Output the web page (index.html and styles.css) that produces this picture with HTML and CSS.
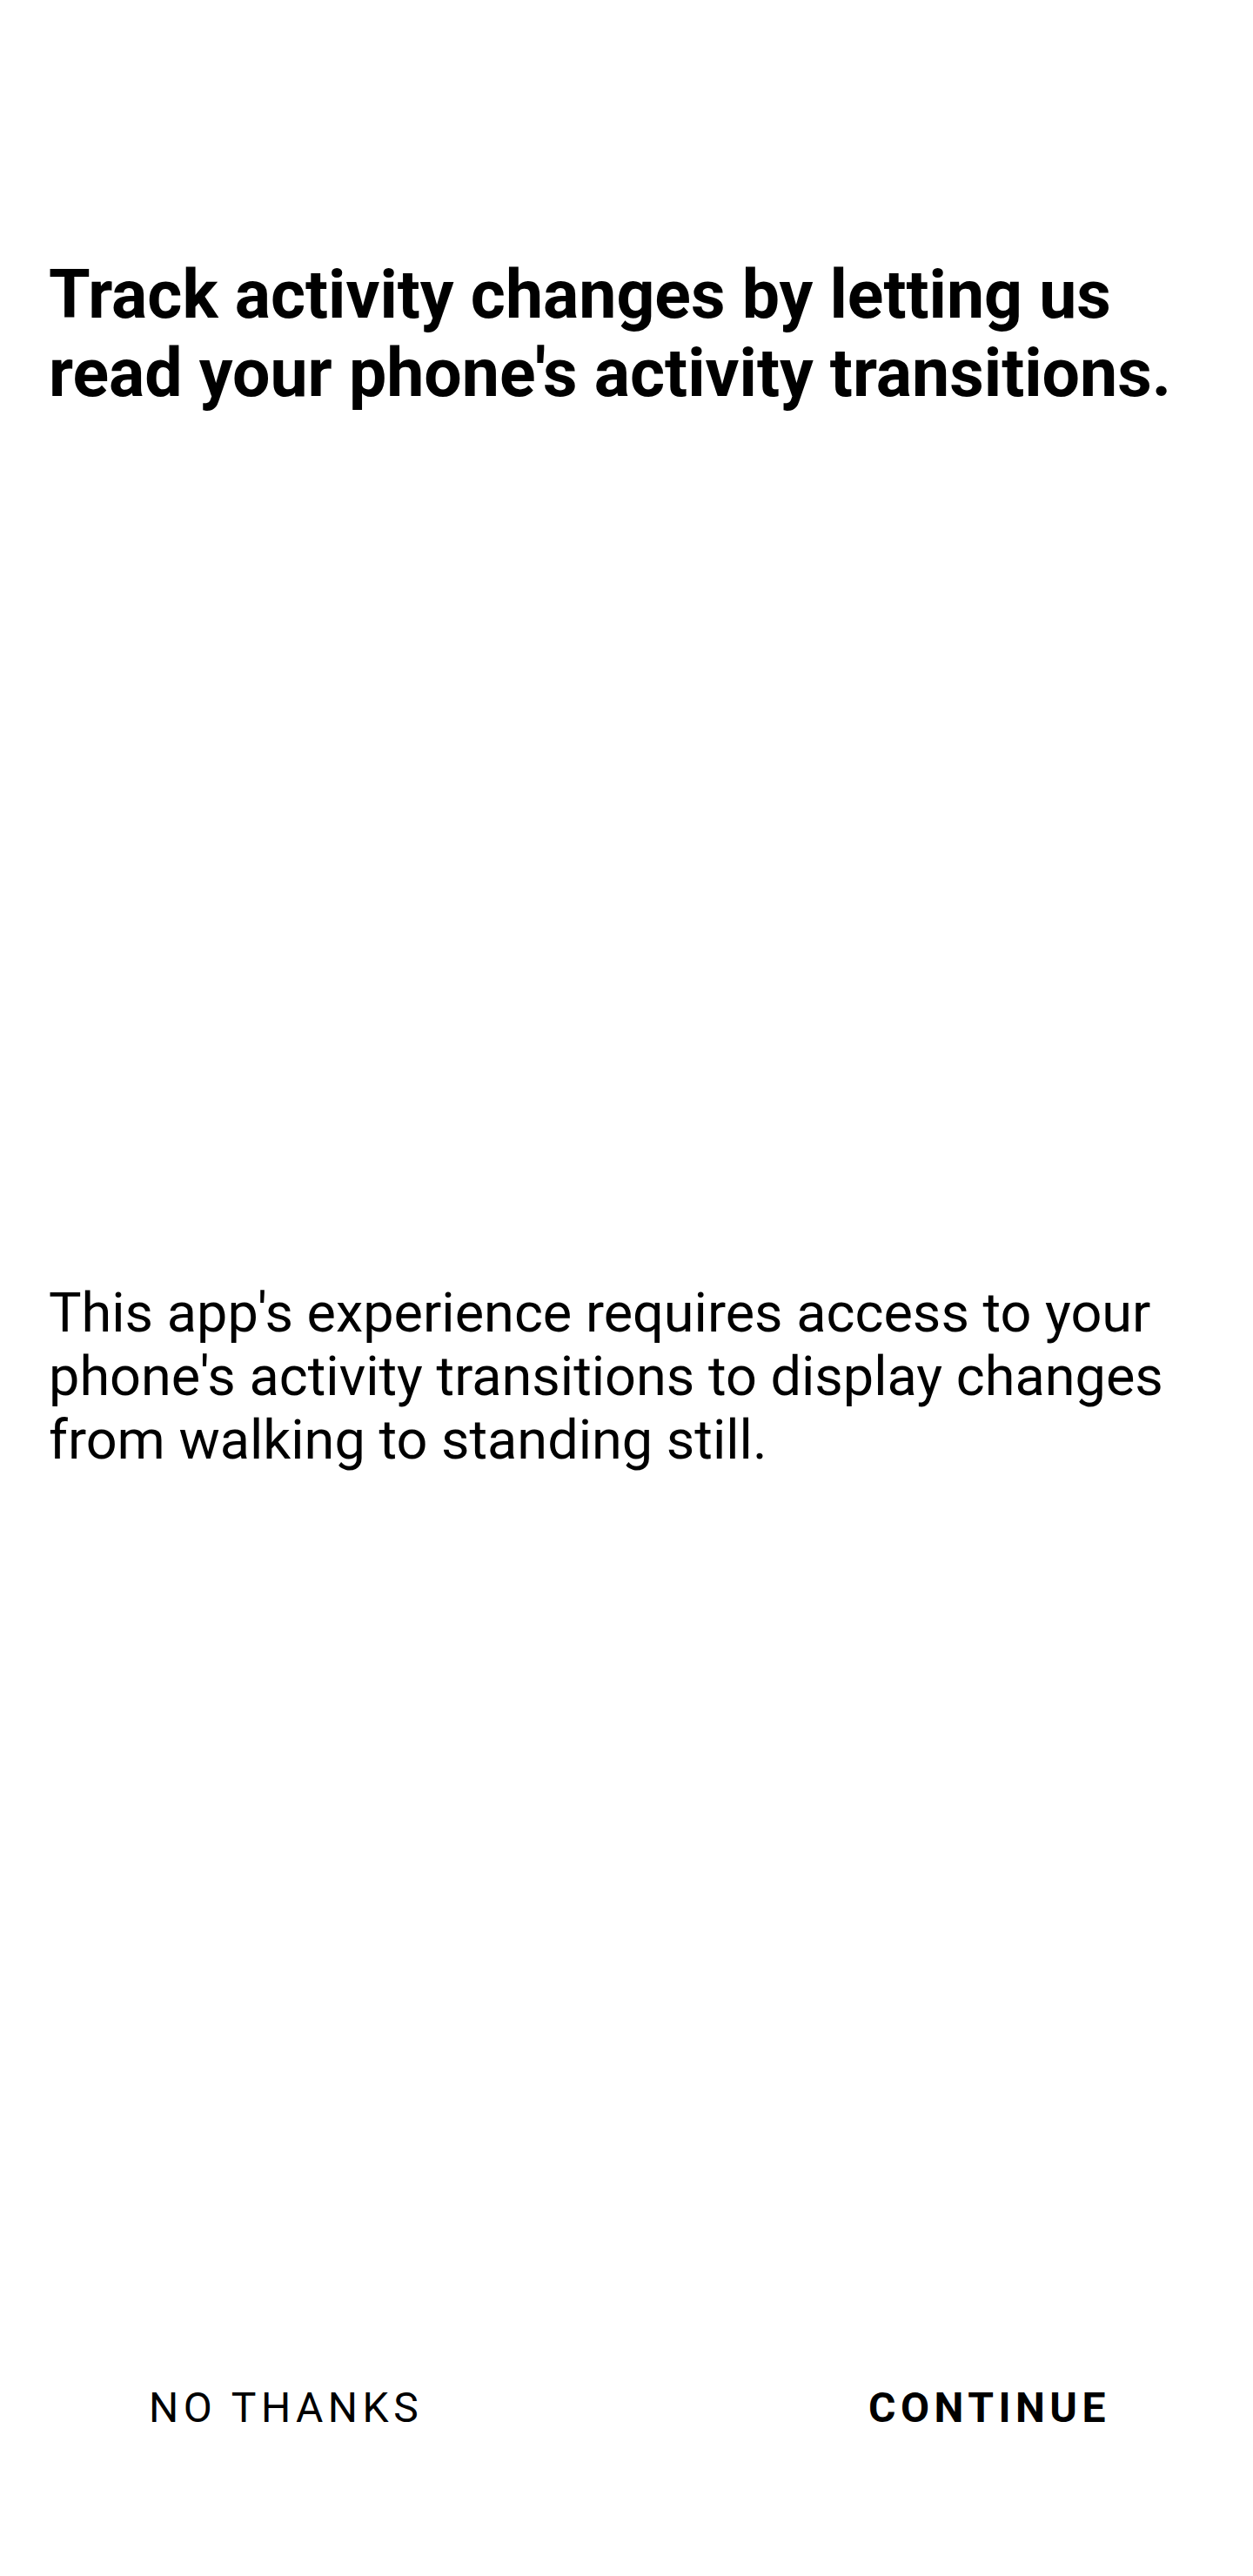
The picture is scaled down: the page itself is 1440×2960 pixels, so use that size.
FILE: index.html
```html
<!DOCTYPE html>
<html lang="en">
<head>
<meta charset="utf-8">
<title>Activity permission</title>
<link rel="stylesheet" href="styles.css">
</head>
<body>
<main class="screen">
  <h1 class="title">Track activity changes by letting us read your phone's activity transitions.</h1>
  <p class="body-text">This app's experience requires access to your phone's activity transitions to display changes from walking to standing still.</p>
  <div class="actions">
    <button class="btn btn-secondary">NO THANKS</button>
    <button class="btn btn-primary">CONTINUE</button>
  </div>
</main>
</body>
</html>
```
FILE: styles.css
```css
html, body {
  margin: 0;
  padding: 0;
  background: #ffffff;
}
body {
  font-family: Roboto, "Liberation Sans", sans-serif;
  color: #000000;
}
.screen {
  width: 1440px;
  height: 2960px;
  box-sizing: border-box;
  display: flex;
  flex-direction: column;
  padding: 0 56px;
}
.title {
  margin: 294px 0 0 0;
  font-size: 77px;
  line-height: 90px;
  font-weight: 700;
}
.body-text {
  margin: 998px 0 0 0;
  font-size: 63px;
  line-height: 73px;
  font-weight: 400;
}
.actions {
  margin-top: auto;
  margin-bottom: 165px;
  display: flex;
  justify-content: space-between;
  padding: 0 108px 0 115px;
}
.btn {
  background: none;
  border: none;
  padding: 0;
  font-family: Roboto, "Liberation Sans", sans-serif;
  font-size: 48px;
  line-height: 56px;
  letter-spacing: 5.5px;
  color: #000;
}
.btn-secondary { font-weight: 400; }
.btn-primary { font-weight: 700; }
```
